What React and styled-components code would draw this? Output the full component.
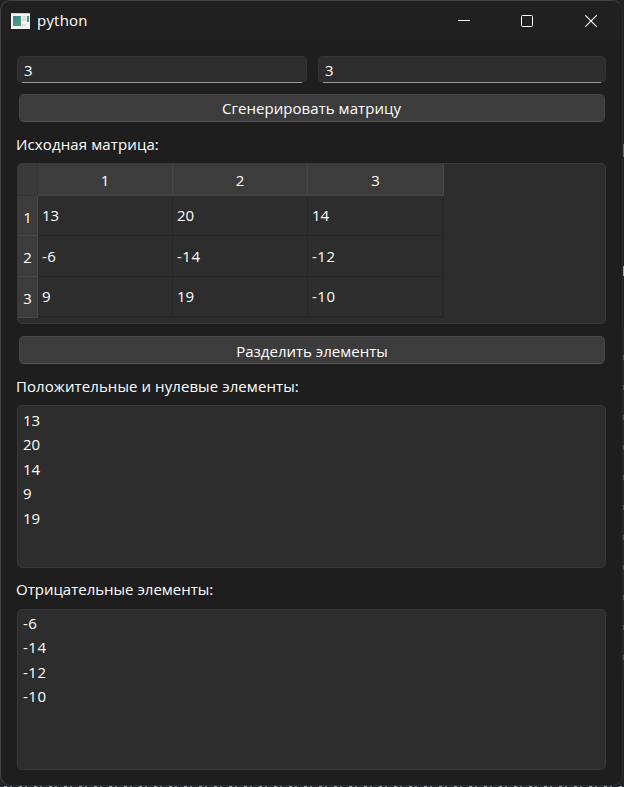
import React from 'react';
import styled, { createGlobalStyle } from 'styled-components';

const GlobalStyle = createGlobalStyle`
  * { box-sizing: border-box; }
  html, body { margin: 0; background: #1e1e1e; overflow: hidden; }
`;

const Desktop = styled.div`
  width: 624px;
  height: 787px;
  padding: 0 1px 1px 0;
  background:
    repeating-linear-gradient(90deg, #25272b 0 4px, #a0a5a8 4px 7px, #25272b 7px 10px, #73787c 10px 12px, #1e1f22 12px 15px) 0 786px / 624px 1px no-repeat,
    linear-gradient(#3574a5, #3574a5) 623px 144px / 1px 13px no-repeat,
    linear-gradient(#8db0c5, #8db0c5) 623px 266px / 1px 10px no-repeat,
    repeating-linear-gradient(#26282d 0 25px, #365a80 25px 30px) 623px 330px / 1px 350px no-repeat,
    #222226;
`;

const Window = styled.div`
  display: flex;
  flex-direction: column;
  width: 623px;
  height: 786px;
  border: 1px solid #434343;
  border-bottom-color: #303030;
  border-right-color: #292929;
  border-radius: 11px;
  background: #1e1e1e;
  overflow: hidden;
  color: #fff;
  font-family: "Open Sans", "Noto Sans", sans-serif;
  font-size: 15px;
  line-height: 20px;
`;

const TitleBar = styled.header`
  display: flex;
  align-items: center;
  flex: none;
  height: 39px;
  padding-left: 10px;
  background: #202020;
`;

const Title = styled.span`
  flex: 1;
  margin-left: 7px;
  padding-bottom: 2px;
`;

const Caption = styled.button`
  display: grid;
  place-items: center;
  width: 64px;
  height: 39px;
  padding: 0;
  border: 0;
  background: none;
  svg { display: block; }
`;

const Controls = styled.div`
  display: flex;
  margin-right: -1px;
`;

const Content = styled.main`
  display: flex;
  flex-direction: column;
  padding: 16px 16px 0;
`;

const Inputs = styled.div`
  display: grid;
  grid-template-columns: 290px 288px;
  gap: 11px;
  height: 27px;
`;

const Field = styled.div`
  height: 27px;
  padding: 3px 6px;
  border: 1px solid #343434;
  border-radius: 5px;
  background: linear-gradient(#9a9a9a, #9a9a9a) 5px 26px / calc(100% - 10px) 1px no-repeat border-box, #2d2d2d;
  border-bottom-color: transparent;
`;

const PushButton = styled.button`
  height: 28px;
  margin: ${(p) => p.$gap}px 1px 0 2px;
  padding: ${(p) => p.$pad || '1px 0 0'};
  border: 1px solid #484848;
  border-bottom-color: #555;
  border-radius: 5px;
  background: #3c3c3c;
  color: inherit;
  font: inherit;
  text-align: center;
`;

const Text = styled.span`
  letter-spacing: ${(p) => p.$track || 0}px;
`;

const Label = styled.div`
  height: 20px;
  margin: ${(p) => p.$gap}px 0 0 -1px;
  white-space: nowrap;
`;

const Frame = styled.section`
  height: ${(p) => p.$height}px;
  margin-top: ${(p) => p.$gap || 9}px;
  border: 1px solid #393939;
  border-radius: 5px;
  background: #2d2d2d;
  overflow: hidden;
`;

const List = styled(Frame)`
  padding: ${(p) => p.$inset}px 5px;
`;

const Item = styled.div`
  height: 24.4px;
  line-height: 25px;
  letter-spacing: ${(p) => (p.$negative ? 0.5 : -0.2)}px;
`;

const Grid = styled.div`
  display: grid;
  grid-template-columns: 20px 135px 135px 136px;
  grid-template-rows: 32px 40px 41px 41px;
  width: 426px;
  letter-spacing: -0.2px;
`;

const Corner = styled.div`
  border-right: 1px solid #343434;
  border-bottom: 1px solid #343434;
  background: #3a3a3a;
`;

const ColumnHead = styled.div`
  display: grid;
  place-items: center;
  padding-top: 2px;
  border-right: 1px solid #484848;
  border-bottom: 2px solid #434343;
  background: #3c3c3c;
`;

const RowHead = styled.div`
  display: grid;
  place-items: center;
  padding-top: 2px;
  border-right: 1px solid #484848;
  border-bottom: 1px solid #484848;
  background: #3c3c3c;
`;

const Cell = styled.div`
  display: flex;
  align-items: center;
  padding-bottom: 1px;
  padding-left: 4px;
  letter-spacing: ${(p) => (p.$negative ? 0.5 : -0.2)}px;
  border-right: ${(p) => (p.$lastColumn ? 2 : 1)}px solid #262626;
  border-bottom: ${(p) => (p.$lastRow ? 2 : 1)}px solid #262626;
`;

const AppIcon = () => (
  <svg width="19" height="16" viewBox="0 0 19 16">
    <defs>
      <linearGradient id="screen" x1="0" y1="0" x2="1" y2="1">
        <stop offset="0" stopColor="#397da5" />
        <stop offset="1" stopColor="#4bad65" />
      </linearGradient>
    </defs>
    <path fill="#f4f4f4" d="M0 0h19v16H0z" />
    <path fill="#c3d2dc" d="M0 0h19v1H0z" />
    <path fill="url(#screen)" d="M2 3h8v10H2z" />
    <path fill="#dcdee0" d="M11 3h4v5h-4zM11 11h4v2h-4z" />
    <path fill="url(#screen)" d="M16 3h2v6h-2z" />
  </svg>
);

const rows = [[13, 20, 14], [-6, -14, -12], [9, 19, -10]];
const positive = [13, 20, 14, 9, 19];
const negative = [-6, -14, -12, -10];

export default function App() {
  return (
    <Desktop>
      <GlobalStyle />
      <Window>
        <TitleBar>
          <AppIcon />
          <Title><Text $track={0.2}>python</Text></Title>
          <Controls>
            <Caption aria-label="Minimize">
              <svg width="14" height="12"><path fill="#fff" d="M2 5h12v1H2z" /></svg>
            </Caption>
            <Caption aria-label="Maximize">
              <svg width="12" height="12"><rect x=".5" y=".5" width="11" height="11" rx="1" fill="none" stroke="#fff" /></svg>
            </Caption>
            <Caption aria-label="Close">
              <svg width="12" height="12"><path d="M.3.3l11.4 11.4M11.7.3L.3 11.7" stroke="#fff" strokeWidth="1.1" /></svg>
            </Caption>
          </Controls>
        </TitleBar>
        <Content>
          <Inputs>
            <Field>3</Field>
            <Field>3</Field>
          </Inputs>
          <PushButton $gap={11} $pad="0 1px 1px 0"><Text $track={0.05}>Сгенерировать матрицу</Text></PushButton>
          <Label $gap={12}><Text $track={0.12}>Исходная матрица:</Text></Label>
          <Frame $height={161}>
            <Grid>
              <Corner />
              {[1, 2, 3].map((n) => <ColumnHead key={n}>{n}</ColumnHead>)}
              {rows.map((row, r) => (
                <React.Fragment key={r}>
                  <RowHead>{r + 1}</RowHead>
                  {row.map((value, c) => (
                    <Cell key={c} $negative={value < 0} $lastColumn={c === 2} $lastRow={r === 2}>{value}</Cell>
                  ))}
                </React.Fragment>
              ))}
            </Grid>
          </Frame>
          <PushButton $gap={12}><Text>Разделить элементы</Text></PushButton>
          <Label $gap={12}><Text $track={0.08}>Положительные и нулевые элементы:</Text></Label>
          <List $height={163} $inset={2}>{positive.map((v) => <Item key={v}>{v}</Item>)}</List>
          <Label $gap={11}><Text>Отрицательные элементы:</Text></Label>
          <List $height={161} $gap={10} $inset={1}>{negative.map((v) => <Item key={v} $negative>{v}</Item>)}</List>
        </Content>
      </Window>
    </Desktop>
  );
}
